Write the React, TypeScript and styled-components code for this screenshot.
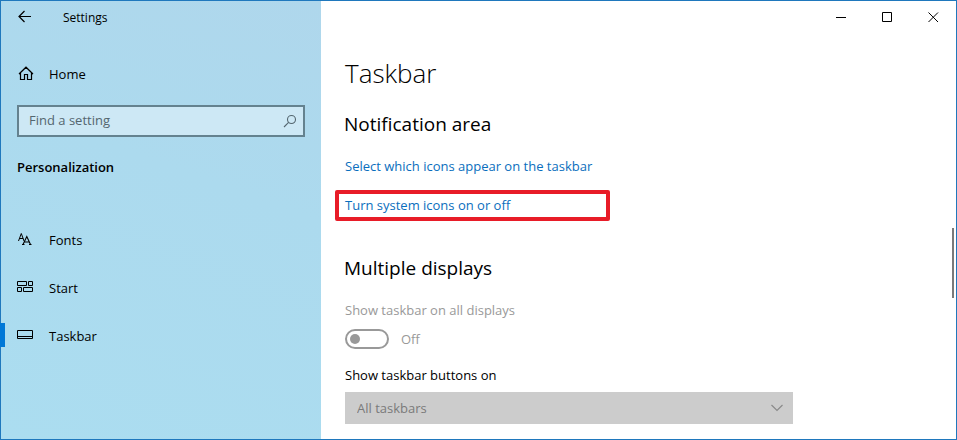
import React from "react";
import styled, { createGlobalStyle, css } from "styled-components";

const GlobalStyle = createGlobalStyle`
  *, *::before, *::after { box-sizing: border-box; }
  body {
    margin: 0;
    background: #ffffff;
    color: #000000;
    font-family: "Segoe UI", "Open Sans", "Noto Sans", sans-serif;
    font-size: 13px;
    line-height: 20px;
  }
  button, input, select { font: inherit; color: inherit; }
`;

const Window = styled.div`
  position: relative;
  display: grid;
  grid-template-columns: 320px minmax(0, 1fr);
  min-height: 100vh;
  border: 1px solid #1f78bd;
`;

const Sidebar = styled.aside`
  background: linear-gradient(20deg, #abddf0 0%, #acdaee 60%, #afd7ec 100%);
`;

const TitleBar = styled.header`
  display: flex;
  align-items: center;
  height: 32px;
  font-size: 12px;
`;

const BackButton = styled.button`
  display: grid;
  place-items: center;
  width: 48px;
  height: 32px;
  padding: 0;
  border: 0;
  background: none;
`;

const AppName = styled.span`
  padding: 2px 0 0 14px;
`;

const NavLink = styled.a<{ $current?: boolean; $compact?: boolean }>`
  position: relative;
  display: flex;
  align-items: center;
  gap: 15px;
  height: ${(p) => (p.$compact ? "40px" : "48px")};
  padding-left: 16px;
  color: #000000;
  font-size: 13px;
  text-decoration: none;
  ${(p) =>
    p.$current &&
    css`
      &::before {
        content: "";
        position: absolute;
        left: -1px;
        top: 11px;
        width: 5px;
        height: 24px;
        background: #0078d7;
      }
    `}
`;

const HomeArea = styled.div`
  padding-top: 21px;
`;

const SearchBox = styled.label`
  display: flex;
  align-items: center;
  height: 32px;
  margin: 11px 16px 0;
  padding: 0 6px 0 10px;
  border: 2px solid #64828f;
  background: #cde8f5;
`;

const SearchInput = styled.input`
  flex: 1;
  min-width: 0;
  padding: 0 0 2px;
  border: 0;
  outline: 0;
  background: none;
  &::placeholder {
    color: #54666f;
    opacity: 1;
  }
`;

const SectionName = styled.h2`
  margin: 20px 16px 0;
  font-size: 13px;
  font-weight: 600;
  line-height: 20px;
`;

const NavList = styled.nav`
  padding-top: 39px;
`;

const Main = styled.main`
  min-width: 0;
`;

const WindowControls = styled.div`
  display: flex;
  justify-content: flex-end;
`;

const WindowButton = styled.button`
  display: grid;
  place-items: center;
  width: 46px;
  height: 32px;
  padding: 0;
  border: 0;
  background: none;
`;

const Content = styled.div`
  max-width: 496px;
  padding: 20px 24px 15px;
`;

const PageTitle = styled.h1`
  margin: 0;
  font-size: 26px;
  font-weight: 300;
  line-height: 40px;
`;

const GroupTitle = styled.h2<{ $spaced?: boolean }>`
  margin: ${(p) => (p.$spaced ? "32px" : "16px")} 0 0 -1px;
  font-size: 19px;
  font-weight: 400;
  line-height: 30px;
`;

const TextLink = styled.a`
  display: block;
  width: fit-content;
  margin-top: 17px;
  color: #0a6ebd;
  text-decoration: none;
`;

const Highlight = styled.div`
  max-width: 275px;
  margin: 14px 0 0 -10px;
  padding: 1px 6px 2px;
  border: 4px solid #e81c28;
  border-radius: 2px;
  ${TextLink} {
    margin-top: 0;
  }
`;

const FieldLabel = styled.label<{ $muted?: boolean }>`
  display: block;
  margin-top: ${(p) => (p.$muted ? "17px" : "16px")};
  color: ${(p) => (p.$muted ? "#999999" : "#000000")};
`;

const ToggleRow = styled.div`
  display: flex;
  align-items: center;
  gap: 12px;
  margin-top: 9px;
  color: #999999;
`;

const Toggle = styled.input`
  appearance: none;
  display: flex;
  align-items: center;
  width: 44px;
  height: 20px;
  margin: 0;
  padding-left: 3px;
  border: 2px solid #999999;
  border-radius: 10px;
  &::before {
    content: "";
    width: 10px;
    height: 10px;
    border-radius: 50%;
    background: #999999;
  }
`;

const SelectBox = styled.div`
  position: relative;
  margin-top: 7px;
  svg {
    position: absolute;
    right: 10px;
    top: 12px;
    pointer-events: none;
  }
`;

const Select = styled.select`
  appearance: none;
  display: block;
  width: 100%;
  height: 32px;
  padding: 0 32px 0 12px;
  border: 0;
  border-radius: 0;
  background: #cccccc;
  color: #7a7a7a;
  opacity: 1;
`;

const ScrollThumb = styled.div`
  position: absolute;
  right: 2px;
  top: 227px;
  width: 2px;
  height: 70px;
  background: #7a7a7a;
`;

const BackIcon = () => (
  <svg width="14" height="14" viewBox="0 0 14 14" fill="none" stroke="#000" strokeWidth="1.2">
    <path d="M13 6.500H1.500M6.500 1L1 6.500l5.500 5.500" />
  </svg>
);

const HomeIcon = () => (
  <svg width="17" height="16" viewBox="0 0 17 16" fill="none" stroke="#000" strokeWidth="1.2">
    <path d="M2 8L9 1.200L16 8M3.500 6.800v6.700h4v-5h3v5h4V6.800" />
  </svg>
);

const SearchIcon = () => (
  <svg width="14" height="14" viewBox="0 0 14 14" fill="none" stroke="#54666f" strokeWidth="1.1">
    <circle cx="8.500" cy="5.500" r="4" />
    <path d="M5.600 8.400L1 13" />
  </svg>
);

const FontsIcon = () => (
  <svg width="17" height="16" viewBox="0 0 17 16" fill="none" stroke="#000">
    <path d="M1.500 9L4.300 1.500L7 9M2.500 6.500h3.700" strokeWidth="1" />
    <path d="M6 12.500L9.800 4.500l3.700 8M7.300 10h5M5 12.500h2.500M12 12.500h2.500" strokeWidth="1.1" />
  </svg>
);

const StartIcon = () => (
  <svg width="17" height="16" viewBox="0 0 17 16" fill="none" stroke="#000">
    <path d="M.5 1.500h9v4h-9zM11.500 1.500h4v4h-4zM.5 7.500h4v4h-4zM6.500 7.500h9v4h-9z" />
  </svg>
);

const TaskbarIcon = () => (
  <svg width="17" height="16" viewBox="0 0 17 16" fill="none" stroke="#000">
    <path d="M.5 2.500h15v8H.5zM.5 8.500h15" />
  </svg>
);

const MinimizeIcon = () => (
  <svg width="11" height="11" viewBox="0 0 11 11" stroke="#000">
    <path d="M0 5.500h10" />
  </svg>
);

const MaximizeIcon = () => (
  <svg width="11" height="11" viewBox="0 0 11 11" fill="none" stroke="#000">
    <path d="M.5 .5h9v9h-9z" />
  </svg>
);

const CloseIcon = () => (
  <svg width="11" height="11" viewBox="0 0 11 11" stroke="#000">
    <path d="M.5 .5l9.500 9.500M10 .5L.5 10" />
  </svg>
);

const ChevronIcon = () => (
  <svg width="12" height="8" viewBox="0 0 12 8" fill="none" stroke="#8a8a8a" strokeWidth="1.2">
    <path d="M.5 1L6 6.500L11.500 1" />
  </svg>
);

const pages = [
  { name: "Fonts", Icon: FontsIcon },
  { name: "Start", Icon: StartIcon },
  { name: "Taskbar", Icon: TaskbarIcon, current: true },
];

export default function App() {
  return (
    <>
      <GlobalStyle />
      <Window>
        <Sidebar>
          <TitleBar>
            <BackButton aria-label="Back">
              <BackIcon />
            </BackButton>
            <AppName>Settings</AppName>
          </TitleBar>
          <HomeArea>
            <NavLink href="#home" $compact>
              <HomeIcon />
              Home
            </NavLink>
          </HomeArea>
          <SearchBox>
            <SearchInput type="text" placeholder="Find a setting" aria-label="Find a setting" />
            <SearchIcon />
          </SearchBox>
          <SectionName>Personalization</SectionName>
          <NavList aria-label="Personalization">
            {pages.map(({ name, Icon, current }) => (
              <NavLink
                key={name}
                href={`#${name.toLowerCase()}`}
                $current={current}
                aria-current={current ? "page" : undefined}
              >
                <Icon />
                {name}
              </NavLink>
            ))}
          </NavList>
        </Sidebar>
        <Main>
          <WindowControls>
            <WindowButton aria-label="Minimize">
              <MinimizeIcon />
            </WindowButton>
            <WindowButton aria-label="Maximize">
              <MaximizeIcon />
            </WindowButton>
            <WindowButton aria-label="Close">
              <CloseIcon />
            </WindowButton>
          </WindowControls>
          <Content>
            <PageTitle>Taskbar</PageTitle>
            <GroupTitle>Notification area</GroupTitle>
            <TextLink href="#icons">Select which icons appear on the taskbar</TextLink>
            <Highlight>
              <TextLink href="#system-icons">Turn system icons on or off</TextLink>
            </Highlight>
            <GroupTitle $spaced>Multiple displays</GroupTitle>
            <FieldLabel htmlFor="all-displays" $muted>
              Show taskbar on all displays
            </FieldLabel>
            <ToggleRow>
              <Toggle id="all-displays" type="checkbox" role="switch" disabled />
              <span>Off</span>
            </ToggleRow>
            <FieldLabel htmlFor="buttons-on">Show taskbar buttons on</FieldLabel>
            <SelectBox>
              <Select id="buttons-on" disabled defaultValue="all">
                <option value="all">All taskbars</option>
              </Select>
              <ChevronIcon />
            </SelectBox>
          </Content>
        </Main>
        <ScrollThumb />
      </Window>
    </>
  );
}
